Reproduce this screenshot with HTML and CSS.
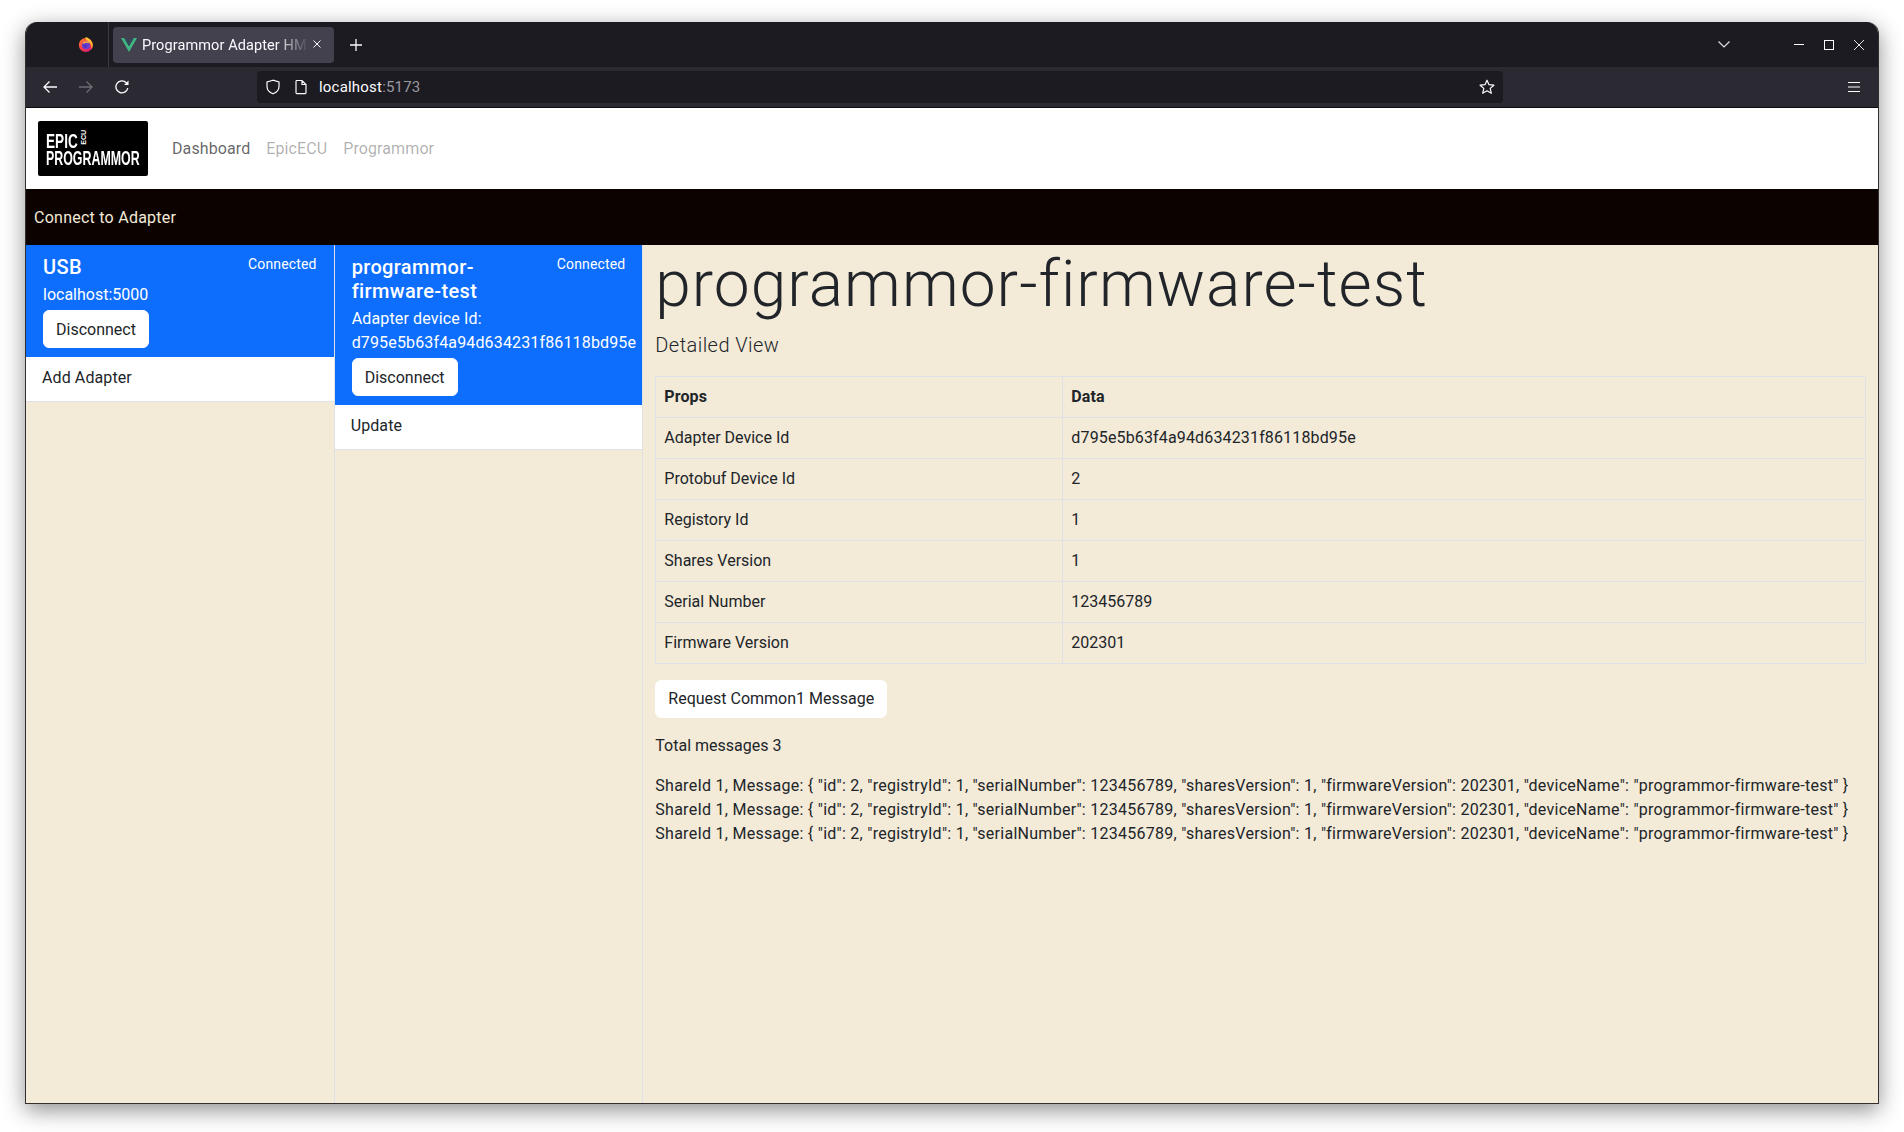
FILE: index.html
```html
<!DOCTYPE html>
<html lang="en">
<head>
<meta charset="utf-8">
<title>Programmor Adapter HMI</title>
<link rel="stylesheet" href="styles.css">
</head>
<body>
<div class="window">
  <div class="titlebar">
    <svg class="ff-logo" viewBox="0 0 16 16" width="16" height="16"><defs><linearGradient id="ffg" x1="0.1" y1="0.1" x2="0.8" y2="1"><stop offset="0" stop-color="#ff7a2e"/><stop offset=".55" stop-color="#f5344f"/><stop offset="1" stop-color="#d81b7a"/></linearGradient><linearGradient id="fft" x1="0" y1="0" x2="0" y2="1"><stop offset="0" stop-color="#ffd43a"/><stop offset="1" stop-color="#ff9a1f"/></linearGradient></defs><circle cx="7.800" cy="9" r="7" fill="url(#ffg)"/><path d="M7.500 1c2.300.7 6.500 2.800 7.300 7.500.2 1.500-.4 3.500-1.500 4.700.4-3.500-.6-6-3-7.500C9 4.800 7.600 3 7.500 1z" fill="url(#fft)"/><circle cx="8" cy="9.200" r="4" fill="#6a3fd0"/><path d="M4.400 7.200C5.600 5.600 7.600 5 9.400 5.600c1 .3 1.800 1 2.300 2-1.500-1-3.600-1.100-5-.4-.8.300-1.500.5-2.300 0z" fill="#ffb02e"/><circle cx="7.200" cy="10" r="2" fill="#4a2fb5" opacity=".7"/></svg>
    <span class="tab-sep"></span>
    <div class="tab">
      <svg class="vue" viewBox="0 0 16 14" width="16" height="14"><path d="M0 0h3.200L8 8.300 12.800 0H16L8 14z" fill="#41b883"/><path d="M3.200 0h2.600L8 3.900 10.200 0h2.600L8 8.300z" fill="#35495e"/></svg>
      <span class="tab-title">Programmor Adapter HMI</span>
      <svg class="tab-close" viewBox="0 0 10 10" width="10" height="10"><path d="M1.500 1.500l7 7M8.500 1.500l-7 7" stroke="#fbfbfe" stroke-width="1" fill="none"/></svg>
    </div>
    <svg class="plus" viewBox="0 0 12 12" width="12" height="12"><path d="M6 0v12M0 6h12" stroke="#fbfbfe" stroke-width="1.300" fill="none"/></svg>
    <span class="grow"></span>
    <svg class="chev" viewBox="0 0 12 7" width="12" height="7"><path d="M.5.500L6 6 11.500.500" stroke="#e0e0e6" stroke-width="1.200" fill="none"/></svg>
    <svg class="win-min" viewBox="0 0 10 10" width="10" height="10"><path d="M0 4.500h10" stroke="#fff" stroke-width="1" fill="none"/></svg>
    <svg class="win-max" viewBox="0 0 10 10" width="10" height="10"><rect x=".5" y=".5" width="9" height="9" stroke="#fff" stroke-width="1" fill="none"/></svg>
    <svg class="win-close" viewBox="0 0 10 10" width="10" height="10"><path d="M0 0l10 10M10 0L0 10" stroke="#fff" stroke-width=".9" fill="none"/></svg>
  </div>
  <div class="toolbar">
    <svg class="tool tool-back" viewBox="0 0 16 16" width="16" height="16"><path d="M15 8H2M7.500 2.500L2 8l5.500 5.500" stroke="#fbfbfe" stroke-width="1.300" fill="none"/></svg>
    <svg class="tool tool-fwd" viewBox="0 0 16 16" width="16" height="16"><path d="M1 8h13M8.500 2.500L14 8l-5.500 5.500" stroke="#6f6e75" stroke-width="1.300" fill="none"/></svg>
    <svg class="tool tool-reload" viewBox="0 0 16 16" width="16" height="16"><path d="M13.800 9a6 6 0 1 1-1.500-5.200L14 5.500" stroke="#fbfbfe" stroke-width="1.300" fill="none"/><path d="M14.500 1.500v4.500H10z" fill="#fbfbfe"/></svg>
    <div class="urlbar">
      <svg class="shield" viewBox="0 0 16 16" width="16" height="16"><path d="M8 1.200L2 3v4.500c0 3.500 2.800 6 6 7.300 3.200-1.300 6-3.800 6-7.300V3z" stroke="#fbfbfe" stroke-width="1.200" fill="none"/></svg>
      <svg class="page" viewBox="0 0 14 16" width="14" height="16"><path d="M2.500 1.500h5.500L12 5.500v8a1.200 1.200 0 0 1-1.200 1.200H3.200A1.200 1.200 0 0 1 2 13.500V2.500a1 1 0 0 1 .5-1zM8 1.500v4h4" stroke="#fbfbfe" stroke-width="1.200" fill="none"/></svg>
      <span class="url">localhost<span class="url-port">:5173</span></span>
      <span class="grow"></span>
      <svg class="star" viewBox="0 0 16 16" width="16" height="16"><path d="M8 1.200l2 4.500 4.900.5-3.700 3.200 1.100 4.900L8 11.800l-4.300 2.500 1.100-4.900L1.100 6.200 6 5.700z" stroke="#fbfbfe" stroke-width="1.200" stroke-linejoin="round" fill="none"/></svg>
    </div>
    <span class="grow"></span>
    <svg class="burger" viewBox="0 0 14 12" width="14" height="12"><path d="M1 1.500h12M1 6h12M1 10.500h12" stroke="#fbfbfe" stroke-width="1.200" fill="none"/></svg>
  </div>
  <nav class="navbar">
    <div class="logo">
      <div class="logo-top"><span class="logo-epic">EPIC</span><span class="logo-ecu">ECU</span></div>
      <div class="logo-prog">PROGRAMMOR</div>
    </div>
    <a class="nav-link nav-active">Dashboard</a>
    <a class="nav-link">EpicECU</a>
    <a class="nav-link">Programmor</a>
  </nav>
  <div class="connect-bar">Connect to Adapter</div>
  <div class="panes">
    <aside class="col">
      <div class="card-active">
        <div class="card-head"><h5 class="card-title">USB</h5><small class="card-status">Connected</small></div>
        <p class="card-text">localhost:5000</p>
        <button class="btn">Disconnect</button>
      </div>
      <div class="list-item">Add Adapter</div>
    </aside>
    <aside class="col">
      <div class="card-active">
        <div class="card-head"><h5 class="card-title card-title-narrow">programmor-firmware-test</h5><small class="card-status">Connected</small></div>
        <p class="card-text card-text-wide">Adapter device Id: <span class="nowrap">d795e5b63f4a94d634231f86118bd95e</span></p>
        <button class="btn">Disconnect</button>
      </div>
      <div class="list-item">Update</div>
    </aside>
    <main class="main">
      <h1 class="display">programmor-firmware-test</h1>
      <p class="lead">Detailed View</p>
      <table class="table">
        <thead><tr><th class="col-props">Props</th><th>Data</th></tr></thead>
        <tbody>
          <tr><td>Adapter Device Id</td><td class="hash">d795e5b63f4a94d634231f86118bd95e</td></tr>
          <tr><td>Protobuf Device Id</td><td>2</td></tr>
          <tr><td>Registory Id</td><td>1</td></tr>
          <tr><td>Shares Version</td><td>1</td></tr>
          <tr><td>Serial Number</td><td>123456789</td></tr>
          <tr><td>Firmware Version</td><td>202301</td></tr>
        </tbody>
      </table>
      <button class="btn">Request Common1 Message</button>
      <p class="total">Total messages 3</p>
      <div class="messages">
        <div>ShareId 1, Message: { "id": 2, "registryId": 1, "serialNumber": 123456789, "sharesVersion": 1, "firmwareVersion": 202301, "deviceName": "programmor-firmware-test" }</div>
        <div>ShareId 1, Message: { "id": 2, "registryId": 1, "serialNumber": 123456789, "sharesVersion": 1, "firmwareVersion": 202301, "deviceName": "programmor-firmware-test" }</div>
        <div>ShareId 1, Message: { "id": 2, "registryId": 1, "serialNumber": 123456789, "sharesVersion": 1, "firmwareVersion": 202301, "deviceName": "programmor-firmware-test" }</div>
      </div>
    </main>
  </div>
</div>
</body>
</html>
```
FILE: styles.css
```css
* { box-sizing: border-box; }
html, body { margin: 0; height: 100%; background: #fff; overflow: hidden; }
body { padding: 22px 0 0 25px; font: 16px/24px Roboto, "Noto Sans", sans-serif; color: #212529; }
.window {
  width: 1854px; height: 1082px; display: flex; flex-direction: column;
  border: 1px solid #332f2f; border-top: 0; border-radius: 12px 12px 0 0; overflow: hidden;
  box-shadow: 0 6px 22px rgba(0,0,0,.45);
  background: #f3ead8;
}
.grow { flex: 1; }
.titlebar { height: 45px; background: #1c1b22; display: flex; align-items: center; flex: none; color: #fbfbfe; }
.ff-logo { margin: -2px 0 0 52px; }
.tab-sep { width: 1px; height: 45px; background: #3a3940; margin-left: 14px; }
.tab { width: 221px; height: 36px; margin-left: 4px; margin-top: 1px; background: #42414d; border-radius: 4px; display: flex; align-items: center; padding-left: 8px; font-size: 14.5px; }
.tab-title { width: 167px; margin-left: 5px; margin-top: 1px; overflow: hidden; white-space: nowrap; letter-spacing: .1px; -webkit-mask-image: linear-gradient(90deg, #000 80%, transparent); mask-image: linear-gradient(90deg, #000 80%, transparent); }
.tab-close { margin-left: 3px; margin-top: -2px; }
.plus { margin-left: 16px; margin-top: 1px; }
.chev { margin-top: -1px; margin-right: 64px; }
.win-min { margin-right: 20px; }
.win-max { margin-right: 20px; }
.win-close { margin-right: 14px; }
.toolbar { height: 41px; background: #2b2a33; border-bottom: 1px solid #0c0c0f; display: flex; align-items: center; flex: none; }
.tool { flex: none; }
.tool-back { margin-left: 16px; }
.tool-fwd { margin-left: 20px; }
.tool-reload { margin-left: 20px; }
.urlbar { width: 1246px; height: 32px; margin-left: 127px; background: #1c1b22; border-radius: 4px; display: flex; align-items: center; padding: 0 8px; color: #fbfbfe; font-size: 15px; }
.page { margin-left: 13px; }
.url { margin-left: 11px; letter-spacing: .2px; }
.url-port { color: #9a99a0; }
.burger { margin-right: 17px; }
.navbar { height: 81px; background: #fff; display: flex; align-items: center; padding-left: 12px; flex: none; }
.logo { width: 110px; height: 55px; background: #000; border-radius: 2px; margin-right: 16px; padding: 12px 0 0 8px; color: #fff; font: 700 20px/17px "Liberation Sans", sans-serif; white-space: nowrap; }
.logo-top { display: flex; align-items: center; }
.logo-epic { display: inline-block; transform: scaleX(.68); transform-origin: left; width: 33px; }
.logo-ecu { display: inline-block; font-size: 7.5px; line-height: 7px; transform: rotate(-90deg) scaleX(.95); width: 7px; margin-left: 1px; }
.logo-prog { display: inline-block; transform: scaleX(.62); transform-origin: left; }
.nav-link { padding: 8px; color: rgba(0,0,0,.62); letter-spacing: .1px; }
.nav-link:not(.nav-active) { color: rgba(0,0,0,.33); }
.connect-bar { height: 56px; background: #0c0200; color: #f3ead8; display: flex; align-items: center; padding: 1px 0 0 8px; flex: none; letter-spacing: .25px; }
.panes { flex: 1; display: flex; min-height: 0; }
.col { width: 16.6667%; border-right: 1px solid #dee2e6; flex: none; }
.card-active { background: #0d6efd; color: #fff; padding: 9px 17px 9px 17px; }
.card-head { display: flex; justify-content: space-between; align-items: flex-start; margin-bottom: 4px; }
.card-title { margin: 0; padding-top: 1px; font-size: 20px; line-height: 24px; font-weight: 500; letter-spacing: .35px; margin-bottom: -1px; }
.card-title-narrow { width: 150px; }
.card-status { font-size: 14px; line-height: 21px; letter-spacing: .15px; }
.card-text { margin: 0 0 4px; position: relative; top: 1px; }
.card-text-wide { letter-spacing: .15px; white-space: normal; }
.nowrap { white-space: nowrap; }
.btn { display: block; height: 38px; padding: 1px 12px 0; border: 1px solid #fff; border-radius: 6px; background: #fff; color: #212529; font: inherit; }
.list-item { height: 45px; background: #fff; border-bottom: 1px solid #dee2e6; padding: 9px 16px; letter-spacing: .1px; }
.main { flex: 1; min-width: 0; padding: 0 12px; }
.display { margin: 0 0 6px; padding-top: 2px; font-size: 64px; line-height: 76.8px; font-weight: 300; letter-spacing: 1.05px; }
.lead { margin: 0 0 16px; font-size: 20px; line-height: 30px; font-weight: 300; letter-spacing: .45px; }
.table { width: 100%; border-collapse: collapse; table-layout: fixed; margin-bottom: 16px; }
.table th, .table td { border: 1px solid #dee2e6; padding: 8px; text-align: left; height: 41px; }
.table th { font-weight: 700; letter-spacing: .1px; }
.col-props { width: 407px; }
.hash { letter-spacing: .15px; }
.total { margin: 16px 0 16px; }
.messages { white-space: nowrap; letter-spacing: .265px; }
```
